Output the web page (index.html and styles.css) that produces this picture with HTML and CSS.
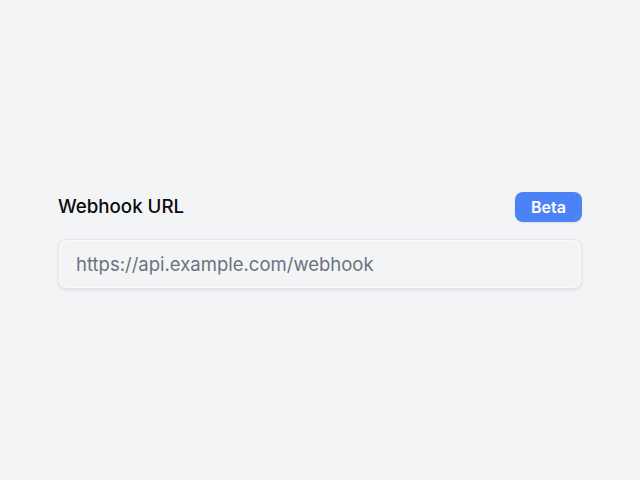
FILE: index.html
```html
<!DOCTYPE html>
<html lang="en">
<head>
    <meta charset="UTF-8">
    <meta name="viewport" content="width=device-width, initial-scale=1.0">
    <title>Webhook URL</title>
    <link rel="stylesheet" href="styles.css">
</head>
<body>

    <div class="field">
        <div class="field-header">
            <label class="label" for="webhook">Webhook URL</label>
            <span class="badge">Beta</span>
        </div>
        <input id="webhook" class="input" type="text" placeholder="https://api.example.com/webhook">
    </div>

</body>
</html>
```

FILE: styles.css
```css
/* Global Styles */
body {
    font-family: Inter, "Noto Sans", sans-serif;
    display: flex;
    justify-content: center;
    align-items: center;
    height: 100vh;
    margin: 0;
    background-color: #f3f4f6;
}

/* Field */
.field {
    width: 524px;
    display: flex;
    flex-direction: column;
    gap: 17px;
}

.field-header {
    display: flex;
    justify-content: space-between;
    align-items: center;
}

.label {
    font-size: 18.7px;
    font-weight: 500;
    color: #0b0b0f;
}

.badge {
    display: inline-flex;
    align-items: center;
    justify-content: center;
    width: 67px;
    height: 30px;
    box-sizing: border-box;
    border-radius: 8px;
    background-color: #4b82f6;
    color: #fff;
    font-size: 16px;
    font-weight: 600;
    box-shadow: 0 1px 2px rgba(0, 0, 0, 0.08);
}

/* Input */
.input {
    width: 100%;
    height: 50px;
    box-sizing: border-box;
    padding: 1px 17px 0;
    font-family: inherit;
    font-size: 18.5px;
    color: #111827;
    background-color: #f3f4f6;
    border: 1px solid #e5e7eb;
    border-radius: 8px;
    box-shadow: 0 1px 3px rgba(0, 0, 0, 0.1), inset 0 0 0 1px #fafafa;
    outline: none;
}

.input::placeholder {
    color: #6b7280;
}
```
